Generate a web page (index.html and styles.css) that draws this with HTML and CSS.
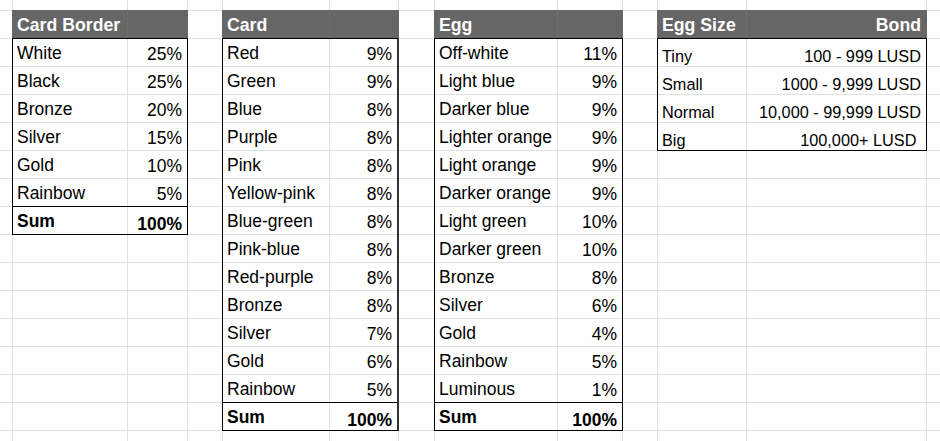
FILE: index.html
```html
<!DOCTYPE html>
<html lang="en">
<head>
<meta charset="utf-8">
<title>Sheet</title>
<link rel="stylesheet" href="styles.css">
</head>
<body>
<div class="sheet">
  <div class="tbl t1">
    <div class="hd"><span>Card Border</span><span></span></div>
    <div class="bd">
      <div class="r"><span>White</span><span>25%</span></div>
      <div class="r"><span>Black</span><span>25%</span></div>
      <div class="r"><span>Bronze</span><span>20%</span></div>
      <div class="r"><span>Silver</span><span>15%</span></div>
      <div class="r"><span>Gold</span><span>10%</span></div>
      <div class="r"><span>Rainbow</span><span>5%</span></div>
      <div class="r sum"><span>Sum</span><span>100%</span></div>
    </div>
  </div>

  <div class="tbl t2">
    <div class="hd"><span>Card</span><span></span></div>
    <div class="bd">
      <div class="r"><span>Red</span><span>9%</span></div>
      <div class="r"><span>Green</span><span>9%</span></div>
      <div class="r"><span>Blue</span><span>8%</span></div>
      <div class="r"><span>Purple</span><span>8%</span></div>
      <div class="r"><span>Pink</span><span>8%</span></div>
      <div class="r"><span>Yellow-pink</span><span>8%</span></div>
      <div class="r"><span>Blue-green</span><span>8%</span></div>
      <div class="r"><span>Pink-blue</span><span>8%</span></div>
      <div class="r"><span>Red-purple</span><span>8%</span></div>
      <div class="r"><span>Bronze</span><span>8%</span></div>
      <div class="r"><span>Silver</span><span>7%</span></div>
      <div class="r"><span>Gold</span><span>6%</span></div>
      <div class="r"><span>Rainbow</span><span>5%</span></div>
      <div class="r sum"><span>Sum</span><span>100%</span></div>
    </div>
  </div>

  <div class="tbl t3">
    <div class="hd"><span>Egg</span><span></span></div>
    <div class="bd">
      <div class="r"><span>Off-white</span><span>11%</span></div>
      <div class="r"><span>Light blue</span><span>9%</span></div>
      <div class="r"><span>Darker blue</span><span>9%</span></div>
      <div class="r"><span>Lighter orange</span><span>9%</span></div>
      <div class="r"><span>Light orange</span><span>9%</span></div>
      <div class="r"><span>Darker orange</span><span>9%</span></div>
      <div class="r"><span>Light green</span><span>10%</span></div>
      <div class="r"><span>Darker green</span><span>10%</span></div>
      <div class="r"><span>Bronze</span><span>8%</span></div>
      <div class="r"><span>Silver</span><span>6%</span></div>
      <div class="r"><span>Gold</span><span>4%</span></div>
      <div class="r"><span>Rainbow</span><span>5%</span></div>
      <div class="r"><span>Luminous</span><span>1%</span></div>
      <div class="r sum"><span>Sum</span><span>100%</span></div>
    </div>
  </div>

  <div class="tbl t4">
    <div class="hd"><span>Egg Size</span><span>Bond</span></div>
    <div class="bd small">
      <div class="r"><span>Tiny</span><span>100 - 999 LUSD</span></div>
      <div class="r"><span>Small</span><span>1000 - 9,999 LUSD</span></div>
      <div class="r"><span>Normal</span><span>10,000 - 99,999 LUSD</span></div>
      <div class="r"><span>Big</span><span>100,000+ LUSD </span></div>
    </div>
  </div>
</div>
</body>
</html>
```
FILE: styles.css
```css
* {
  box-sizing: border-box;
  margin: 0;
  padding: 0;
}

html,
body {
  width: 940px;
  height: 441px;
  overflow: hidden;
  background: #fff;
}

body {
  font-family: "Liberation Sans", Arial, sans-serif;
  font-size: 17.5px;
  color: #000;
}

.sheet {
  display: grid;
  grid-template-columns: 13px 115px 60px 35px 107px 69px 36px 123px 65px 35px 89px 180px 1fr;
  grid-template-rows: 11px repeat(16, 28px);
  height: 441px;
  overflow: hidden;
  --gl: #dfe0e0;
  background-image:
    linear-gradient(to bottom, transparent 27px, var(--gl) 27px),
    linear-gradient(var(--gl), var(--gl)),
    linear-gradient(var(--gl), var(--gl)),
    linear-gradient(var(--gl), var(--gl)),
    linear-gradient(var(--gl), var(--gl)),
    linear-gradient(var(--gl), var(--gl)),
    linear-gradient(var(--gl), var(--gl)),
    linear-gradient(var(--gl), var(--gl)),
    linear-gradient(var(--gl), var(--gl)),
    linear-gradient(var(--gl), var(--gl)),
    linear-gradient(var(--gl), var(--gl)),
    linear-gradient(var(--gl), var(--gl)),
    linear-gradient(var(--gl), var(--gl));
  background-size:
    100% 28px,
    1px 100%, 1px 100%, 1px 100%, 1px 100%, 1px 100%, 1px 100%,
    1px 100%, 1px 100%, 1px 100%, 1px 100%, 1px 100%, 1px 100%;
  background-position:
    0 11px,
    12px 0, 127px 0, 187px 0, 222px 0, 329px 0, 398px 0,
    434px 0, 557px 0, 622px 0, 657px 0, 746px 0, 926px 0;
  background-repeat:
    repeat-y,
    no-repeat, no-repeat, no-repeat, no-repeat, no-repeat, no-repeat,
    no-repeat, no-repeat, no-repeat, no-repeat, no-repeat, no-repeat;
}

.tbl {
  align-self: start;
  margin: -1px 0 0 -1px;
  display: flex;
  flex-direction: column;
}

.t1 { grid-column: 2 / 4; grid-row: 2 / 10; }
.t2 { grid-column: 5 / 7; grid-row: 2 / 17; }
.t3 { grid-column: 8 / 10; grid-row: 2 / 17; }
.t4 { grid-column: 11 / 13; grid-row: 2 / 7; }

.t1 .hd, .t1 .r { grid-template-columns: 115px 1fr; }
.t2 .hd, .t2 .r { grid-template-columns: 107px 1fr; }
.t3 .hd, .t3 .r { grid-template-columns: 123px 1fr; }
.t4 .hd, .t4 .r { grid-template-columns: 89px 1fr; }

.hd {
  display: grid;
  height: 28px;
  background: #666;
  color: #fff;
  font-size: 17.7px;
  font-weight: bold;
  border-left: 1px solid #666;
  border-right: 1px solid #666;
}

.hd span {
  padding: 1px 5px 0 4px;
  line-height: 28px;
  white-space: pre;
  overflow: hidden;
}

.hd span:first-child {
  border-right: 1px solid #6b6b6b;
}

.hd span:last-child {
  text-align: right;
}

.bd {
  border: 1px solid #000;
}

.t2 .bd {
  border-right: 2px solid #333;
}

.r {
  display: grid;
  height: 28px;
  border-top: 1px solid var(--gl);
}

.r:first-child {
  height: 27px;
  border-top: 0;
}

.r.sum {
  border-top-color: #000;
  font-weight: bold;
}

.r span {
  padding: 1px 5px 0 4px;
  line-height: 26px;
  white-space: pre;
  overflow: hidden;
}

.r span:first-child {
  border-right: 1px solid var(--gl);
}

.r span:last-child {
  text-align: right;
  padding-top: 2px;
}

.r.sum span:last-child {
  padding-top: 4px;
}

.small .r span {
  font-size: 16.3px;
  line-height: 20px;
  padding-top: 7px;
}

.small .r span:last-child {
  padding-top: 7px;
}
```
